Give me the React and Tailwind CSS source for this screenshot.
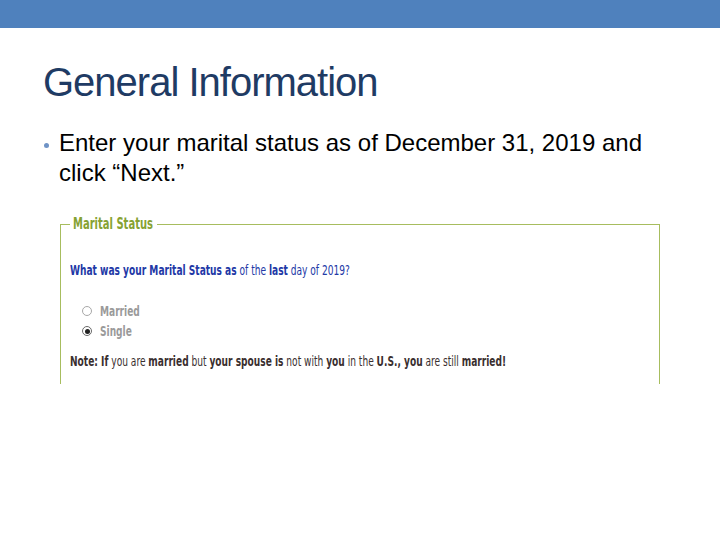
import React from "react";

const Radio = ({ checked }) => (
  <span
    className={`flex h-[10px] w-[10px] items-center justify-center rounded-full border bg-white ${
      checked ? "border-[#6a6a6a]" : "border-[#a8a8a8]"
    }`}
  >
    {checked && <span className="h-[5px] w-[5px] rounded-full bg-[#222]" />}
  </span>
);

const App = () => {
  return (
    <div className="h-[540px] w-[720px] overflow-hidden bg-white font-['Liberation_Sans',Arial,sans-serif]">
      <div className="h-[28px] bg-[#4f81bd]" />

      <h1 className="ml-[43px] mt-[31px] text-[40px] leading-[46px] tracking-[-1px] text-[#1f3b64]">
        General Information
      </h1>

      <div className="ml-[44px] mt-[23px] flex">
        <span className="mt-[15px] mr-[10px] h-[5px] w-[5px] shrink-0 rounded-full bg-[#6f93c6]" />
        <p className="w-[600px] text-[24px] leading-[30px] text-black">
          Enter your marital status as of December 31, 2019 and click “Next.”
        </p>
      </div>

      <fieldset className="ml-[60px] mt-[28px] h-[168px] w-[600px] min-w-0 border border-b-0 border-[#a7bd5e] font-['DejaVu_Sans_Condensed','DejaVu_Sans',sans-serif]">
        <legend className="ml-[9px] w-[87px] px-[3px] text-[15px] font-bold leading-[16px] text-[#86a232]">
          <span className="inline-block origin-left scale-x-[0.74] whitespace-nowrap">Marital Status</span>
        </legend>

        <div className="ml-[9px] mt-[30px] flex flex-col">
          <p className="origin-left scale-x-[0.72] whitespace-nowrap text-[14px] leading-[16px] text-[#2238a6]">
            <b>What was your Marital Status as</b> of the <b>last</b> day of 2019?
          </p>

          <div className="ml-[12px] mt-[26px] flex flex-col gap-[6px]">
            <div className="flex items-center gap-[8px]">
              <Radio />
              <span className="origin-left scale-x-[0.72] text-[14px] font-bold leading-[14px] text-[#9a9a9a]">
                Married
              </span>
            </div>
            <div className="flex items-center gap-[8px]">
              <Radio checked />
              <span className="origin-left scale-x-[0.72] text-[14px] font-bold leading-[14px] text-[#9a9a9a]">
                Single
              </span>
            </div>
          </div>

          <p className="mt-[15px] origin-left scale-x-[0.72] whitespace-nowrap text-[14px] leading-[16px] text-[#3a2f2f]">
            <b>Note: If</b> you are <b>married</b> but <b>your spouse is</b> not with{" "}
            <b>you</b> in the <b>U.S., you</b> are still <b>married!</b>
          </p>
        </div>
      </fieldset>
    </div>
  );
};

export default App;
